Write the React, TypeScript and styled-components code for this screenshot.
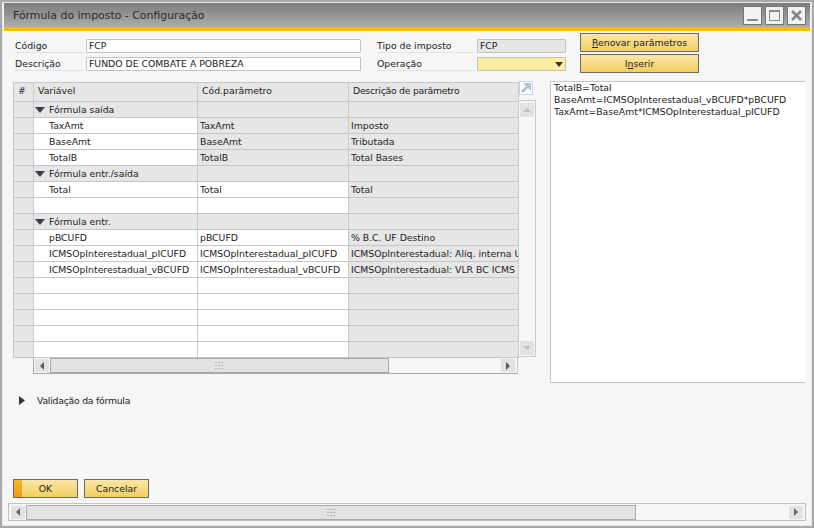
import React from "react";
import styled, { createGlobalStyle } from "styled-components";

const Global = createGlobalStyle`
  html, body { margin: 0; padding: 0; background: #fff; }
  #root { width: 814px; height: 529px; overflow: hidden; }
`;

const FONT = `"DejaVu Sans", "Noto Sans", sans-serif`;

const Win = styled.div`
  box-sizing: border-box;
  width: 814px;
  height: 528px;
  border: 2px solid #a9a9a9;
  outline: 1px solid #e8e8e8;
  outline-offset: -3px;
  background: #f6f6f6;
  font-family: ${FONT};
  font-size: 9.3px;
  color: #222;
  display: flex;
  flex-direction: column;
  padding: 1px 2px 0 2px;
`;
const TitleBar = styled.div`
  height: 24px;
  flex: none;
  background: linear-gradient(#7c7c7c, #adadad);
  border-bottom: 4px solid #fdb913;
  display: flex;
  align-items: center;
  padding: 0 4px 0 9px;
  color: #2a2a2a;
  font-size: 10.9px;
`;
const TitleText = styled.div`
  flex: 1;
  padding-top: 1px;
`;
const WinBtn = styled.div`
  box-sizing: border-box;
  width: 19px;
  height: 19px;
  margin-left: 3px;
  border: 1px solid #777;
  background: #f2f2f2;
  display: flex;
  align-items: center;
  justify-content: center;
`;
const Body = styled.div`
  flex: 1;
  display: flex;
  flex-direction: column;
  padding: 8px 0 0 9px;
  min-height: 0;
`;
const FormRow = styled.div`
  display: flex;
  height: 38px;
  flex: none;
`;
const Col = styled.div<{ $w: number }>`
  width: ${(p) => p.$w}px;
  flex: none;
  display: flex;
  flex-direction: column;
  gap: 4px;
`;
const Field = styled.div`
  display: flex;
  height: 14px;
  align-items: stretch;
`;
const Label = styled.div<{ $w: number }>`
  box-sizing: border-box;
  width: ${(p) => p.$w}px;
  flex: none;
  margin-left: 2px;
  border-bottom: 1px solid #dce4ee;
  line-height: 14px;
  margin-right: 2px;
`;
const Input = styled.div<{ $w: number; $bg?: string }>`
  box-sizing: border-box;
  width: ${(p) => p.$w}px;
  flex: none;
  border: 1px solid #c2c2c2;
  border-radius: 1px;
  background: ${(p) => p.$bg || "#fff"};
  padding: 0 2px;
  line-height: 12px;
  display: flex;
  justify-content: space-between;
  align-items: center;
`;
const YButtons = styled.div`
  display: flex;
  flex-direction: column;
  gap: 2px;
  margin-top: -6px;
  margin-left: 14px;
`;
const Btn = styled.div<{ $w: number }>`
  box-sizing: border-box;
  width: ${(p) => p.$w}px;
  height: 19px;
  border: 1px solid #6a6a6a;
  background: linear-gradient(#fbe6a6, #f3cf61);
  display: flex;
  align-items: center;
  justify-content: center;
  position: relative;
  color: #222;
  u { text-underline-offset: 1px; }
`;
const OkMark = styled.span`
  position: absolute;
  left: 0;
  top: 0;
  bottom: 0;
  width: 8px;
  background: linear-gradient(#fbb52a, #f0981a);
`;
const Main = styled.div`
  display: flex;
  margin-top: 5px;
  height: 302px;
  flex: none;
`;
const GridWrap = styled.div`
  width: 523px;
  flex: none;
  display: flex;
  flex-direction: column;
`;
const GridTop = styled.div`
  display: flex;
`;
const Table = styled.div`
  box-sizing: border-box;
  width: 506px;
  flex: none;
  border-top: 1px solid #c6c6c6;
  border-left: 1px solid #c6c6c6;
`;
const Row = styled.div`
  display: flex;
  height: 16px;
  box-sizing: border-box;
  border-bottom: 1px solid #c6c6c6;
`;
const HeaderRow = styled(Row)`
  height: 19px;
`;
const Cell = styled.div<{ $w: number; $bg?: string; $indent?: number }>`
  box-sizing: border-box;
  width: ${(p) => p.$w}px;
  flex: none;
  background: ${(p) => p.$bg || "#fff"};
  border-right: 1px solid #cacaca;
  padding-left: ${(p) => p.$indent ?? 2}px;
  line-height: 14px;
  white-space: nowrap;
  overflow: hidden;
  display: flex;
  align-items: center;
  gap: 4px;
`;
const HeaderCell = styled(Cell)<{ $tight?: boolean }>`
  background: #e6e6e6;
  padding-left: 4px;
  padding-bottom: 2px;
  letter-spacing: ${(p) => (p.$tight ? "-0.26px" : "normal")};
`;
const VScroll = styled.div`
  width: 17px;
  flex: none;
  display: flex;
  flex-direction: column;
  align-items: stretch;
  margin-bottom: 1px;
`;
const Expand = styled.div`
  box-sizing: border-box;
  width: 14px;
  height: 14px;
  margin-top: -1px;
  border: 1px solid #c3d5e8;
  background: #fff;
  margin-bottom: 5px;
  display: flex;
  align-items: center;
  justify-content: center;
`;
const VTrack = styled.div`
  flex: 1;
  box-sizing: border-box;
  border: 1px solid #c9c9c9;
  border-left: none;
  background: #f6f6f6;
  display: flex;
  flex-direction: column;
  justify-content: space-between;
  padding: 2px 1px 1px 1px;
`;
const ScrollBtn = styled.div<{ $w: number; $h: number }>`
  width: ${(p) => p.$w}px;
  height: ${(p) => p.$h}px;
  flex: none;
  background: #e2e2e2;
  display: flex;
  align-items: center;
  justify-content: center;
`;
const HScroll = styled.div`
  box-sizing: border-box;
  margin-left: 20px;
  width: 485px;
  height: 16px;
  border-bottom: 1px solid #a8a8a8;
  border-left: 1px solid #a8a8a8;
  border-right: 1px solid #c4c4c4;
  display: flex;
  align-items: center;
  padding: 0 2px 0 1px;
`;
const Thumb = styled.div<{ $w: number; $color: string }>`
  box-sizing: border-box;
  width: ${(p) => p.$w}px;
  height: 15px;
  flex: none;
  background: #e2e2e2;
  border: 1px solid ${(p) => p.$color};
  margin-left: 1px;
  display: flex;
  align-items: center;
  justify-content: center;
`;
const Spacer = styled.div`
  flex: 1;
`;
const Editor = styled.div`
  box-sizing: border-box;
  width: 256px;
  flex: none;
  margin: -1px 0 0 14px;
  height: 302px;
  background: #fff;
  border: 1px solid #c6c6c6;
  border-right: none;
  padding: 0 3px;
  line-height: 12px;
  color: #222;
`;
const Validation = styled.div`
  display: flex;
  align-items: center;
  margin-top: 9px;
  margin-left: 6px;
  gap: 12px;
  height: 14px;
  flex: none;
  letter-spacing: -0.24px;
`;
const Actions = styled.div`
  display: flex;
  gap: 6px;
  margin-top: 72px;
  flex: none;
`;
const BottomScroll = styled.div`
  box-sizing: border-box;
  width: 798px;
  height: 18px;
  margin: 5px 0 0 -5px;
  border: 1px solid #c2c2ba;
  display: flex;
  align-items: center;
  padding: 0 2px 0 2px;
  flex: none;
`;

const Tri = ({ d, c = "#444", w = 8, h = 8 }: { d: string; c?: string; w?: number; h?: number }) => (
  <svg width={w} height={h} viewBox={`0 0 ${w} ${h}`} style={{ display: "block", flex: "none" }}>
    <path d={d} fill={c} />
  </svg>
);
const Down = () => <Tri d="M0 0h10L5 6z" c="#3c3c4a" w={10} h={6} />;
const Grip = () => (
  <svg width="9" height="7" viewBox="0 0 9 7" style={{ display: "block" }}>
    {[0, 3, 6].flatMap((x) =>
      [0, 3, 6].map((y) => <rect key={`${x}${y}`} x={x} y={y} width="2" height="1" fill="#b5b5b5" />)
    )}
  </svg>
);

const W = [20, 164, 151, 170];
const GRAY = "#e6e6e6";

type R =
  | { kind: "group"; label: string }
  | { kind: "row"; a?: string; b?: string; c?: string; grayB?: boolean };

const rows: R[] = [
  { kind: "group", label: "Fórmula saída" },
  { kind: "row", a: "TaxAmt", b: "TaxAmt", c: "Imposto", grayB: true },
  { kind: "row", a: "BaseAmt", b: "BaseAmt", c: "Tributada", grayB: true },
  { kind: "row", a: "TotalB", b: "TotalB", c: "Total Bases", grayB: true },
  { kind: "group", label: "Fórmula entr./saída" },
  { kind: "row", a: "Total", b: "Total", c: "Total" },
  { kind: "row" },
  { kind: "group", label: "Fórmula entr." },
  { kind: "row", a: "pBCUFD", b: "pBCUFD", c: "% B.C. UF Destino" },
  { kind: "row", a: "ICMSOpInterestadual_pICUFD", b: "ICMSOpInterestadual_pICUFD", c: "ICMSOpInterestadual: Alíq. interna UF" },
  { kind: "row", a: "ICMSOpInterestadual_vBCUFD", b: "ICMSOpInterestadual_vBCUFD", c: "ICMSOpInterestadual: VLR BC ICMS" },
  { kind: "row" },
  { kind: "row" },
  { kind: "row" },
  { kind: "row" },
  { kind: "row" },
];

export default function App() {
  return (
    <>
      <Global />
      <Win>
        <TitleBar>
          <TitleText>Fórmula do imposto - Configuração</TitleText>
          <WinBtn>
            <svg width="13" height="13" viewBox="0 0 13 13"><rect x="1" y="10" width="11" height="2" fill="#8a8a8a" /></svg>
          </WinBtn>
          <WinBtn>
            <svg width="13" height="13" viewBox="0 0 13 13"><rect x="1.5" y="1.5" width="10" height="10" fill="none" stroke="#8a8a8a" /><rect x="1" y="1" width="11" height="2" fill="#8a8a8a" /></svg>
          </WinBtn>
          <WinBtn>
            <svg width="13" height="13" viewBox="0 0 13 13"><path d="M2 2l9 9M11 2l-9 9" stroke="#858585" strokeWidth="2.6" /></svg>
          </WinBtn>
        </TitleBar>
        <Body>
          <FormRow>
            <Col $w={362}>
              <Field><Label $w={69}>Código</Label><Input $w={275}>FCP</Input></Field>
              <Field><Label $w={69}>Descrição</Label><Input $w={275}>FUNDO DE COMBATE A POBREZA</Input></Field>
            </Col>
            <Col $w={191}>
              <Field><Label $w={98}>Tipo de imposto</Label><Input $w={89} $bg="#e6e6e6">FCP</Input></Field>
              <Field><Label $w={98}>Operação</Label><Input $w={89} $bg="#fdeda0"><span /><Tri d="M0 2h8L4 7z" c="#333" /></Input></Field>
            </Col>
            <YButtons>
              <Btn $w={119}><span><u>R</u>enovar parâmetros</span></Btn>
              <Btn $w={119}><span>I<u>n</u>serir</span></Btn>
            </YButtons>
          </FormRow>
          <Main>
            <GridWrap>
              <GridTop>
                <Table>
                  <HeaderRow>
                    <HeaderCell $w={W[0]}>#</HeaderCell>
                    <HeaderCell $w={W[1]}>Variável</HeaderCell>
                    <HeaderCell $w={W[2]}>Cód.parâmetro</HeaderCell>
                    <HeaderCell $w={W[3]} $tight>Descrição de parâmetro</HeaderCell>
                  </HeaderRow>
                  {rows.map((r, i) =>
                    r.kind === "group" ? (
                      <Row key={i}>
                        <Cell $w={W[0]} $bg={GRAY} />
                        <Cell $w={W[1]} $bg={GRAY} $indent={1}><Down />{r.label}</Cell>
                        <Cell $w={W[2]} $bg={GRAY} />
                        <Cell $w={W[3]} $bg={GRAY} />
                      </Row>
                    ) : (
                      <Row key={i}>
                        <Cell $w={W[0]} $bg={GRAY} />
                        <Cell $w={W[1]} $indent={15}>{r.a}</Cell>
                        <Cell $w={W[2]} $bg={r.grayB ? GRAY : "#fff"}>{r.b}</Cell>
                        <Cell $w={W[3]} $bg={GRAY}>{r.c}</Cell>
                      </Row>
                    )
                  )}
                </Table>
                <VScroll>
                  <Expand>
                    <svg width="12" height="12" viewBox="0 0 12 12"><path d="M3 1h8v8l-3-3-5 5-2-2 5-5z" fill="#a8c2e0" /></svg>
                  </Expand>
                  <VTrack>
                    <ScrollBtn $w={14} $h={14}><Tri d="M0 6h8L4 2z" c="#bdbdbd" /></ScrollBtn>
                    <ScrollBtn $w={14} $h={14}><Tri d="M0 2h8L4 6z" c="#bdbdbd" /></ScrollBtn>
                  </VTrack>
                </VScroll>
              </GridTop>
              <HScroll>
                <ScrollBtn $w={14} $h={13}><Tri d="M6 0v8L2 4z" c="#5a5a5a" /></ScrollBtn>
                <Thumb $w={339} $color="#a8a8a8"><Grip /></Thumb>
                <Spacer />
                <ScrollBtn $w={14} $h={13}><Tri d="M2 0v8l4-4z" c="#5a5a5a" /></ScrollBtn>
              </HScroll>
            </GridWrap>
            <Editor>
              TotalB=Total<br />
              BaseAmt=ICMSOpInterestadual_vBCUFD*pBCUFD<br />
              TaxAmt=BaseAmt*ICMSOpInterestadual_pICUFD
            </Editor>
          </Main>
          <Validation>
            <Tri d="M0 0v9l6-4.500z" c="#33333f" w={6} h={9} />
            <span>Validação da fórmula</span>
          </Validation>
          <Actions>
            <Btn $w={65}><OkMark />OK</Btn>
            <Btn $w={65}>Cancelar</Btn>
          </Actions>
          <BottomScroll>
            <ScrollBtn $w={14} $h={13}><Tri d="M6 0v8L2 4z" c="#666" /></ScrollBtn>
            <Thumb $w={610} $color="#aaa"><Grip /></Thumb>
            <Spacer />
            <ScrollBtn $w={14} $h={13}><Tri d="M2 0v8l4-4z" c="#666" /></ScrollBtn>
          </BottomScroll>
        </Body>
      </Win>
    </>
  );
}
